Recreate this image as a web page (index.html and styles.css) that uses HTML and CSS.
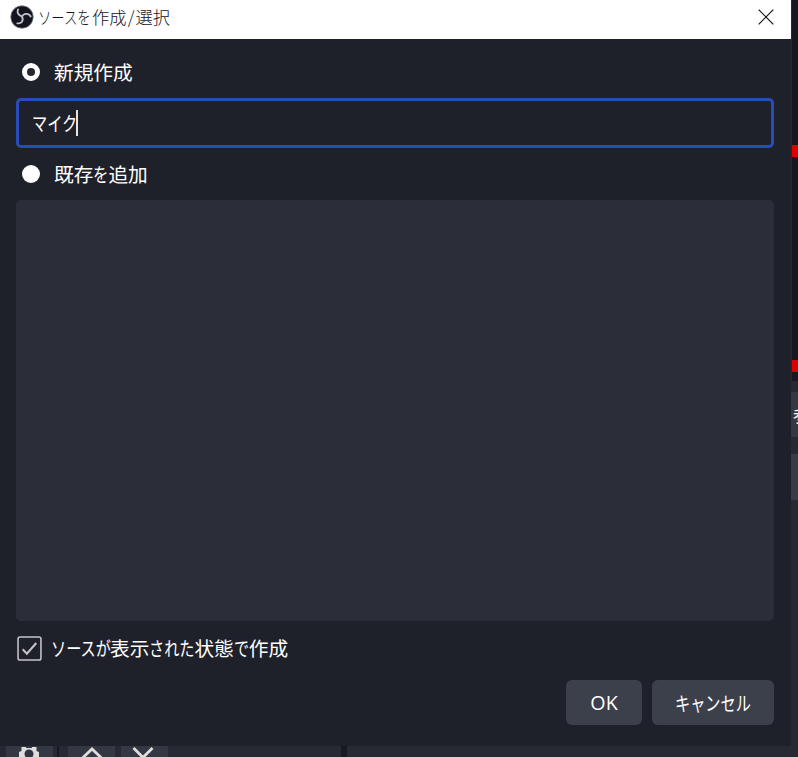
FILE: index.html
```html
<!DOCTYPE html>
<html lang="ja">
<head>
<meta charset="utf-8">
<title>ソースを作成/選択</title>
<link rel="stylesheet" href="styles.css">
</head>
<body>
<main class="desktop">
  <div class="upper">
    <section class="dialog">
      <header class="titlebar">
        <svg class="logo" viewBox="0 0 24 24"><circle cx="12" cy="12" r="11.2" fill="#14141e" stroke="#777780" stroke-width=".8"/><g fill="none" stroke="#c3c3c8" stroke-width="1.800" stroke-linecap="round"><path d="M12 11.500C8.500 10.300 6.800 8 8 4.300"/><path d="M12 11.500C13.500 8.300 18.500 7.500 20.700 11.500"/><path d="M12 11.500C14 15.500 11.500 19 7.300 18.300"/></g></svg>
        <h1 class="title"><span class="kana k4">ソースを</span>作成<span class="slash">/</span>選択</h1>
        <svg class="close" viewBox="0 0 16 16"><path d="M.7.7l14.600 14.600M15.300.7L.7 15.300" stroke="#111" stroke-width="1.200"/></svg>
      </header>
      <div class="content">
        <label class="option"><i class="radio selected"></i><span class="text">新規作成</span></label>
        <div class="field"><span class="text"><span class="kana k3">マイク</span></span><i class="caret"></i></div>
        <label class="option existing"><i class="radio"></i><span class="text">既存<span class="kana k1">を</span>追加</span></label>
        <div class="list"></div>
        <label class="visible">
          <svg class="check" viewBox="0 0 24 24"><rect x="1" y="1" width="22" height="22" rx="2" fill="none" stroke="#c5c5c7" stroke-width="1.500"/><path d="M5.500 12.800l4 4.200 9-10.300" fill="none" stroke="#c5c5c7" stroke-width="2"/></svg>
          <span class="text"><span class="kana k4">ソースが</span>表示<span class="kana k3">された</span>状態<span class="kana k1">で</span>作成</span>
        </label>
        <footer class="actions">
          <button class="ok">OK</button>
          <button class="cancel"><span class="kana k5">キャンセル</span></button>
        </footer>
      </div>
    </section>
    <aside class="backdrop">
      <div class="preview"><i class="handle first"></i><i class="handle second"></i></div>
      <div class="piece">参</div>
      <div class="piece lower"></div>
    </aside>
  </div>
  <div class="toolbar">
    <div class="tool gear"><svg viewBox="0 0 22 22"><path d="M3.500 1H8v1h6V1h4.500v4l2.500 1v5l-2.500 2v5h-15v-5L1 11V6l2.500-1z" fill="#dedede"/><circle cx="11" cy="8" r="4.500" fill="#30343e"/></svg></div>
    <i class="separator"></i>
    <div class="tool"><svg viewBox="0 0 22 22"><path d="M1.500 12L11 3l9.500 9" fill="none" stroke="#dedede" stroke-width="2.800"/></svg></div>
    <div class="tool down"><svg viewBox="0 0 22 22"><path d="M1.500 2L11 11.500 20.500 2" fill="none" stroke="#dedede" stroke-width="2.800"/></svg></div>
    <i class="divider"></i>
  </div>
</main>
</body>
</html>
```
FILE: styles.css
```css
* { box-sizing: border-box; }
body { margin: 0; overflow: hidden; font-family: "Noto Sans CJK JP", sans-serif; background: #272a33; }
.desktop { width: 798px; height: 757px; overflow: hidden; }
.upper { height: 746px; display: flex; }
.dialog { width: 791px; background: #1f212a; color: #fff; }
.titlebar { height: 39px; background: #fff; display: flex; align-items: center; padding: 0 17px 6px 10px; color: #15151b; }
.logo { width: 24px; height: 24px; flex: none; }
.title { margin: 1px 0 0 4px; font-size: 17.3px; line-height: 24px; font-weight: 300; white-space: nowrap; }
.title .k4 { width: 54px; }
.slash { display: inline-block; width: 9px; text-align: center; }
.close { width: 16px; height: 16px; margin-left: auto; }
.content { padding: 18px 16px 0; }
.text { font-size: 19.7px; line-height: 30px; white-space: nowrap; }
.kana { display: inline-block; white-space: nowrap; transform: scaleX(.77); transform-origin: left center; }
.k1 { width: 15px; }
.k3 { width: 45px; }
.k4 { width: 59px; }
.option { display: flex; align-items: center; height: 30px; padding-left: 6px; }
.radio { width: 18px; height: 18px; border-radius: 50%; background: #fff; margin-right: 14px; }
.radio.selected { background: #25262e; border: 5px solid #fff; }
.field { width: 758px; height: 50px; margin-top: 11px; border: 3px solid #284cb8; border-radius: 5px; display: flex; align-items: center; padding-left: 13px; }
.field .text { width: 44px; line-height: 28px; margin-top: -1px; }
.caret { width: 2px; height: 26px; background: #e4e4e1; }
.existing { margin-top: 11px; }
.list { width: 758px; height: 421px; margin-top: 11px; background: #2b2e38; border-radius: 5px; }
.visible { display: flex; align-items: center; height: 30px; margin: 12px 0 0 1px; }
.check { width: 25px; height: 25px; margin-right: 9px; }
.actions { display: flex; justify-content: flex-end; gap: 10px; margin-top: 17px; width: 758px; }
.actions button { height: 45px; border: 0; padding: 0; border-radius: 6px; background: #3c404b; color: #fff; font: 19.7px/45px "Open Sans", "Noto Sans CJK JP", sans-serif; }
.actions .ok { width: 76px; }
.actions .cancel { width: 122px; font-family: "Noto Sans CJK JP", sans-serif; }
.k5 { width: 76px; text-align: left; }
.backdrop { width: 7px; overflow: hidden; background: #272a33; }
.preview { height: 381px; background: #18171f; border-left: 1px solid #650f19; padding-top: 145px; }
.handle { display: block; height: 12px; background: #dc0000; }
.handle.second { margin-top: 203px; }
.piece { height: 45px; margin-top: 11px; background: #343842; color: #fff; font-size: 17px; line-height: 45px; padding-left: 2px; overflow: hidden; }
.piece.lower { margin-top: 17px; height: 46px; background: #393c46; }
.toolbar { height: 11px; overflow: hidden; display: flex; padding-left: 6px; background: #272a33; }
.tool { width: 47px; height: 11px; overflow: hidden; background: #343842; margin-right: 6px; text-align: center; }
.tool svg { display: block; width: 22px; height: 22px; margin: 0 auto; }
.tool.gear { margin-right: 4px; }
.tool.gear svg { margin-left: 12px; }
.tool.down svg { margin-left: 11px; }
.separator { width: 2px; background: #171920; margin-right: 9px; }
.divider { width: 6px; background: #181a22; margin-left: 167px; }
```
